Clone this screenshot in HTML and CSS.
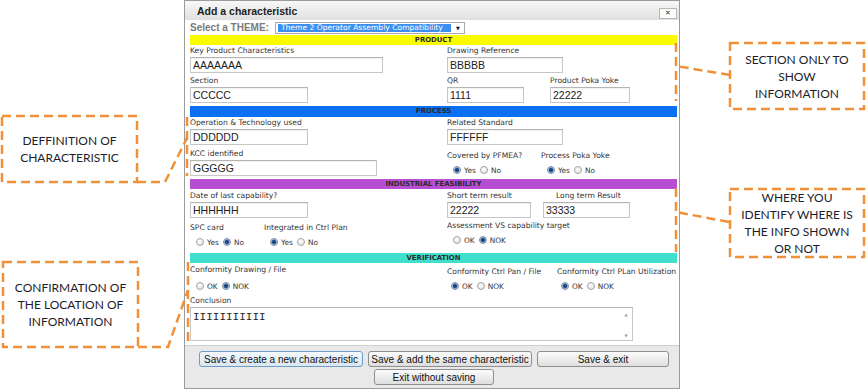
FILE: index.html
```html
<!DOCTYPE html>
<html lang="en">
<head>
    <meta charset="UTF-8">
    <title>Add a characteristic</title>
    <link rel="stylesheet" href="styles.css">
</head>
<body>
<div class="page">

    <!-- Dialog -->
    <div class="dialog">
        <div class="titlebar">
            <span class="title">Add a characteristic</span>
            <span class="close">&#10005;</span>
        </div>

        <div class="theme-row">
            <span class="theme-label">Select a THEME:</span>
            <div class="select">
                <span class="select-value">Theme 2 Operator Assembly Compatibility</span>
                <span class="select-arrow">&#9660;</span>
            </div>
        </div>

        <!-- Product -->
        <div class="section">
            <div class="section-head product">PRODUCT</div>
            <div class="section-body product-body">
                <div class="row">
                    <div class="field col-a">
                        <label>Key Product Characteristics</label>
                        <input type="text" class="w193" value="AAAAAAA">
                    </div>
                    <div class="field">
                        <label>Drawing Reference</label>
                        <input type="text" class="w116" value="BBBBB">
                    </div>
                </div>
                <div class="row">
                    <div class="field col-a">
                        <label>Section</label>
                        <input type="text" class="w118" value="CCCCC">
                    </div>
                    <div class="field col-qr">
                        <label>QR</label>
                        <input type="text" class="w77" value="1111">
                    </div>
                    <div class="field">
                        <label>Product Poka Yoke</label>
                        <input type="text" class="w80" value="22222">
                    </div>
                </div>
            </div>
        </div>

        <!-- Process -->
        <div class="section">
            <div class="section-head process">PROCESS</div>
            <div class="section-body process-body">
                <div class="row">
                    <div class="field col-a">
                        <label>Operation &amp; Technology used</label>
                        <input type="text" class="w118" value="DDDDDD">
                    </div>
                    <div class="field">
                        <label>Related Standard</label>
                        <input type="text" class="w116" value="FFFFFF">
                    </div>
                </div>
                <div class="row">
                    <div class="field col-a">
                        <label>KCC identified</label>
                        <input type="text" class="w187" value="GGGGG">
                    </div>
                    <div class="field col-pfmea">
                        <label class="low">Covered by PFMEA?</label>
                        <div class="radios">
                            <input type="radio" name="pfmea" checked><span>Yes</span>
                            <input type="radio" name="pfmea"><span>No</span>
                        </div>
                    </div>
                    <div class="field">
                        <label class="low">Process Poka Yoke</label>
                        <div class="radios">
                            <input type="radio" name="ppy" checked><span>Yes</span>
                            <input type="radio" name="ppy"><span>No</span>
                        </div>
                    </div>
                </div>
            </div>
        </div>

        <!-- Industrial feasibility -->
        <div class="section">
            <div class="section-head industrial">INDUSTRIAL FEASIBILITY</div>
            <div class="section-body industrial-body">
                <div class="row">
                    <div class="field col-a">
                        <label>Date of last capability?</label>
                        <input type="text" class="w118" value="HHHHHH">
                    </div>
                    <div class="field col-short">
                        <label>Short term result</label>
                        <input type="text" class="w84" value="22222">
                    </div>
                    <div class="field">
                        <label class="indent">Long term Result</label>
                        <input type="text" class="w87" value="33333">
                    </div>
                </div>
                <div class="row">
                    <div class="field col-spc">
                        <label>SPC card</label>
                        <div class="radios">
                            <input type="radio" name="spc"><span>Yes</span>
                            <input type="radio" name="spc" checked><span>No</span>
                        </div>
                    </div>
                    <div class="field col-ctrl">
                        <label>Integrated in Ctrl Plan</label>
                        <div class="radios">
                            <input type="radio" name="ctrl" checked><span>Yes</span>
                            <input type="radio" name="ctrl"><span>No</span>
                        </div>
                    </div>
                    <div class="field">
                        <label class="high">Assessment VS capability target</label>
                        <div class="radios">
                            <input type="radio" name="assess"><span>OK</span>
                            <input type="radio" name="assess" checked><span>NOK</span>
                        </div>
                    </div>
                </div>
            </div>
        </div>

        <!-- Verification -->
        <div class="section">
            <div class="section-head verification">VERIFICATION</div>
            <div class="section-body verification-body">
                <div class="row">
                    <div class="field col-a">
                        <label>Conformity Drawing / File</label>
                        <div class="radios">
                            <input type="radio" name="cdf"><span>OK</span>
                            <input type="radio" name="cdf" checked><span>NOK</span>
                        </div>
                    </div>
                    <div class="field col-pan">
                        <label class="low">Conformity Ctrl Pan / File</label>
                        <div class="radios tight">
                            <input type="radio" name="cpf" checked><span>OK</span>
                            <input type="radio" name="cpf"><span>NOK</span>
                        </div>
                    </div>
                    <div class="field">
                        <label class="low">Conformity Ctrl PLan Utilization</label>
                        <div class="radios tight">
                            <input type="radio" name="cpu" checked><span>OK</span>
                            <input type="radio" name="cpu"><span>NOK</span>
                        </div>
                    </div>
                </div>
                <div class="field conclusion">
                    <label>Conclusion</label>
                    <div class="textarea-box">
                        <textarea>IIIIIIIIIII</textarea>
                        <div class="scroll">
                            <span>&#9650;</span>
                            <span>&#9660;</span>
                        </div>
                    </div>
                </div>
            </div>
        </div>

        <!-- Buttons -->
        <div class="buttons">
            <button class="btn btn-wide focused">Save &amp; create a new characteristic</button>
            <button class="btn btn-wide">Save &amp; add the same characteristic</button>
            <button class="btn btn-exit">Save &amp; exit</button>
            <button class="btn btn-cancel">Exit without saving</button>
        </div>
    </div>

    <!-- Annotations drawn over the screenshot -->
    <svg class="guides" width="866" height="390" viewBox="0 0 866 390">
        <rect x="2" y="116" width="135" height="66"/>
        <path d="M137 182 H165 L187 138"/>
        <path d="M187 117 V176"/>

        <rect x="3" y="262" width="135" height="85"/>
        <path d="M138 347 H168 L188 290"/>
        <path d="M188 262 V342"/>

        <rect x="730" y="43" width="134" height="66"/>
        <path d="M730 75 L676 66"/>
        <path d="M676 43 V101"/>

        <rect x="730" y="189" width="134" height="68"/>
        <path d="M729 222 L676 212"/>
        <path d="M676 188 V252"/>
    </svg>

    <div class="note note-definition">DEFFINITION OF<br>CHARACTERISTIC</div>
    <div class="note note-confirmation">CONFIRMATION OF<br>THE LOCATION OF<br>INFORMATION</div>
    <div class="note note-section">SECTION ONLY TO<br>SHOW<br>INFORMATION</div>
    <div class="note note-identify">WHERE YOU<br>IDENTIFY WHERE IS<br>THE INFO SHOWN<br>OR NOT</div>
</div>
</body>
</html>
```

FILE: styles.css
```css
/* Reset */
* {
    margin: 0;
    padding: 0;
    box-sizing: border-box;
}

body {
    width: 866px;
    height: 390px;
    overflow: hidden;
    background-color: #fff;
    font-family: "DejaVu Sans", Verdana, sans-serif;
    color: #333;
}

.page {
    position: relative;
    width: 866px;
    height: 390px;
    padding-left: 184px;
}

/* Dialog frame */
.dialog {
    width: 496px;
    height: 389px;
    border: 1px solid #9c9c9c;
    background-color: #fff;
    display: flex;
    flex-direction: column;
}

.titlebar {
    height: 19px;
    display: flex;
    align-items: center;
    justify-content: space-between;
    padding: 0 2px 0 12px;
    background: linear-gradient(#f8f8f8, #e0e0e0);
}

.title {
    font-family: "Liberation Sans", Arial, sans-serif;
    font-weight: bold;
    font-size: 10.5px;
    color: #1e1e1e;
}

.close {
    width: 18px;
    height: 11px;
    margin-top: 5px;
    border: 1px solid #b8b8b8;
    background-color: #fbfbfb;
    font-size: 7px;
    font-weight: bold;
    line-height: 9px;
    text-align: center;
    color: #333;
}

/* Theme select */
.theme-row {
    height: 15px;
    display: flex;
    align-items: center;
    padding-left: 5px;
}

.theme-label {
    font-family: "Liberation Sans", Arial, sans-serif;
    font-weight: bold;
    font-size: 10px;
    color: #7a7a7a;
    margin-right: 6px;
}

.select {
    width: 190px;
    height: 12px;
    border: 1px solid #a9a9a9;
    background-color: #fff;
    display: flex;
    align-items: center;
}

.select-value {
    width: 173px;
    height: 8px;
    margin-left: 2px;
    background-color: #3b8ff0;
    color: #fff;
    font-size: 7.6px;
    line-height: 8px;
    padding-left: 3px;
    white-space: nowrap;
    overflow: hidden;
}

.select-arrow {
    font-size: 5px;
    margin-left: 5px;
    color: #111;
}

/* Sections */
.section {
    margin: 0 2px 0 5px;
}

.section-head {
    height: 10px;
    font-size: 6.9px;
    font-weight: bold;
    line-height: 10px;
    text-align: center;
    color: #2a2a2a;
}

.product { background-color: #fbfb00; }
.process { background-color: #0a6ff0; height: 11px; line-height: 11px; }
.industrial { background-color: #b84fd2; }
.verification { background-color: #3fdfcc; }

.section-body {
    display: flex;
    flex-direction: column;
}

.product-body { padding: 1px 0 3px; gap: 3px; }
.process-body { padding: 1px 0 3px; gap: 4px; }
.industrial-body { padding: 2px 0 5px; gap: 5px; }
.verification-body { padding: 2px 0 4px; gap: 4px; }

.row {
    display: flex;
}

.field {
    display: flex;
    flex-direction: column;
}

.field label {
    display: block;
    height: 11px;
    font-size: 7.6px;
    line-height: 10px;
    color: #333;
    white-space: nowrap;
}

.field label.low { padding-top: 2px; height: 13px; }
.field label.high { margin-top: -2px; }
.field label.indent { padding-left: 13px; }

.col-a { width: 257px; }
.col-qr { width: 103px; }
.col-pfmea { width: 94px; }
.col-short { width: 96px; }
.col-spc { width: 74px; }
.col-ctrl { width: 183px; }
.col-pan { width: 110px; }

/* Text inputs */
input[type="text"] {
    height: 16px;
    border: 1px solid #c6c6c6;
    border-top-color: #b4b4b4;
    padding-left: 2px;
    font-family: "Liberation Sans", Arial, sans-serif;
    font-size: 10.5px;
    color: #222;
    background-color: #fff;
    box-shadow: inset 0 1px 1px rgba(0, 0, 0, 0.06);
}

.w77 { width: 77px; }
.w80 { width: 80px; }
.w84 { width: 84px; }
.w87 { width: 87px; }
.w116 { width: 116px; }
.w118 { width: 118px; }
.w187 { width: 187px; }
.w193 { width: 193px; }

/* Radio groups */
.radios {
    height: 12px;
    margin-top: 2px;
    padding-left: 6px;
    display: flex;
    align-items: center;
    font-size: 7.4px;
    color: #333;
}

.radios.tight { margin-top: 2px; padding-left: 4px; }
.verification-body .col-a .radios { margin-top: 4px; }

.radios span {
    margin: 0 4px 0 3px;
}

input[type="radio"] {
    appearance: none;
    -webkit-appearance: none;
    width: 8px;
    height: 8px;
    border-radius: 50%;
    border: 1px solid #a4a4a4;
    background: radial-gradient(circle at 40% 35%, #ffffff, #dcdcdc);
}

input[type="radio"]:checked {
    border-color: #7d8da3;
    background: radial-gradient(circle, #173a6b 0, #234d86 1.6px, #8fb0d8 2.6px, #eef2f7 3.5px);
}

/* Conclusion */
.textarea-box {
    width: 443px;
    height: 34px;
    border: 1px solid #c6c6c6;
    border-top-color: #b4b4b4;
    display: flex;
    background-color: #fff;
}

textarea {
    flex: 1;
    border: none;
    resize: none;
    outline: none;
    padding: 3px 2px;
    font-family: "Liberation Mono", "Courier New", monospace;
    font-size: 11px;
    line-height: 12px;
    color: #222;
    overflow: hidden;
}

.scroll {
    width: 12px;
    display: flex;
    flex-direction: column;
    justify-content: space-between;
    align-items: center;
    padding: 4px 0 2px;
    font-size: 4px;
    color: #9a9a9a;
}

/* Button bar */
.buttons {
    flex: 1;
    display: flex;
    flex-wrap: wrap;
    justify-content: center;
    align-content: flex-start;
    column-gap: 5px;
    row-gap: 2px;
    padding: 5px 0 0 4px;
    border-top: 1px solid #cfcfcf;
    background-color: #e9e9e9;
}

.btn {
    height: 16px;
    border: 1px solid #8f8f8f;
    border-radius: 3px;
    background: linear-gradient(#fcfcfc, #dedede);
    font-family: "Liberation Sans", Arial, sans-serif;
    font-size: 10px;
    color: #111;
    cursor: pointer;
}

.btn.focused {
    border-color: #6f9dc8;
    background: linear-gradient(#f4f9fd, #dbe7f1);
}

.btn-wide { width: 164px; }
.btn-exit { width: 132px; }
.btn-cancel { width: 120px; }

/* Orange annotations */
.guides {
    position: absolute;
    left: 0;
    top: 0;
    pointer-events: none;
    fill: none;
    stroke: #f0913a;
    stroke-width: 2.5;
    stroke-dasharray: 9 5;
}

.note {
    position: absolute;
    display: flex;
    align-items: center;
    justify-content: center;
    text-align: center;
    font-family: Lato, "Open Sans", sans-serif;
    font-size: 12px;
    line-height: 17px;
    color: #1d1d2b;
}

.note-definition { left: 2px; top: 116px; width: 135px; height: 66px; }
.note-confirmation { left: 3px; top: 262px; width: 135px; height: 85px; }
.note-section { left: 730px; top: 43px; width: 134px; height: 66px; }
.note-identify { left: 730px; top: 189px; width: 134px; height: 68px; }
```
